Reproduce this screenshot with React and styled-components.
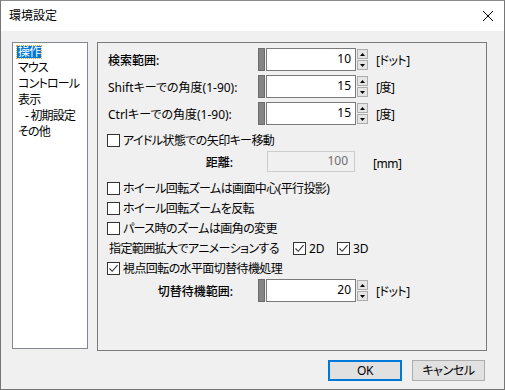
import styled, { createGlobalStyle } from "styled-components";

const GlobalStyle = createGlobalStyle`
  html, body {
    margin: 0;
    padding: 0;
    background: #ffffff;
  }
  body {
    font-family: "Noto Sans", "Noto Sans CJK JP", sans-serif;
    font-size: 12px;
    font-feature-settings: "palt";
    color: #000;
  }
  * {
    box-sizing: border-box;
  }
`;

const Window = styled.div`
  width: 505px;
  height: 390px;
  border: 1px solid #767676;
  border-top-color: #8a8a8a;
  background: #f0f0f0;
  display: flex;
  flex-direction: column;
`;

const TitleBar = styled.div`
  height: 30px;
  background: #ffffff;
  display: flex;
  align-items: center;
  justify-content: space-between;
  padding: 0 9px 1px 8px;
  font-size: 12px;
  line-height: 14px;
`;

const CloseButton = styled.span`
  display: flex;
  width: 12px;
  height: 12px;
  margin-right: 1px;
`;

const Body = styled.div`
  flex: 1;
  display: flex;
  flex-direction: column;
  padding: 11px 17px 8px 11px;
`;

const Main = styled.div`
  display: flex;
  align-items: flex-start;
  gap: 9px;
`;

const ListBox = styled.ul`
  list-style: none;
  margin: 0;
  width: 76px;
  height: 307px;
  padding: 1px 0 0 5px;
  background: #ffffff;
  border: 1px solid #828790;
  letter-spacing: -0.8px;
  overflow: hidden;
`;

const ListItem = styled.li`
  height: 16px;
  line-height: 16px;
  white-space: nowrap;
  padding-left: ${(p) => p.$indent || 0}px;
`;

const Selected = styled.span`
  display: inline-block;
  line-height: 12px;
  padding: 0 1px;
  margin-left: -1px;
  background: #0078d7;
  color: #ffffff;
  outline: 1px dotted #f7a23a;
`;

const Panel = styled.div`
  width: 390px;
  height: 309px;
  border: 1px solid #7a7a7a;
  padding: 5px 0 0 9px;
  display: flex;
  flex-direction: column;
`;

const FieldRow = styled.div`
  display: flex;
  align-items: center;
  height: ${(p) => p.$h || 23}px;
  margin-top: ${(p) => p.$mt || 0}px;
`;

const FieldLabel = styled.span`
  width: 151px;
  padding-left: 1px;
  padding-right: ${(p) => (p.$right ? 25 : 0)}px;
  text-align: ${(p) => (p.$right ? "right" : "left")};
  font-weight: ${(p) => (p.$bold ? 500 : 400)};
  white-space: nowrap;
`;

const Grip = styled.span`
  width: 7px;
  height: 23px;
  margin-right: 1px;
  background: #858585;
  border: 1px solid #6c6c6c;
`;

const NumberBox = styled.div`
  width: 90px;
  height: 23px;
  border: 1px solid #7a7a7a;
  background: #ffffff;
  text-align: right;
  padding-right: 4px;
  line-height: 20px;
`;

const DisabledBox = styled.div`
  width: 88px;
  height: 21px;
  margin-left: 9px;
  border: 1px solid #cccccc;
  background: #f0f0f0;
  color: #6d6d6d;
  text-align: right;
  padding-right: 6px;
  line-height: 18px;
`;

const Spin = styled.div`
  display: flex;
  flex-direction: column;
  gap: 1px;
  margin-left: 1px;
`;

const SpinButton = styled.span`
  width: 11px;
  height: 10px;
  background: #e5e5e5;
  border: 1px solid #acacac;
  display: flex;
  align-items: center;
  justify-content: center;
`;

const Unit = styled.span`
  margin-left: ${(p) => p.$ml || 8}px;
  white-space: nowrap;
  letter-spacing: -0.5px;
  padding-top: ${(p) => p.$pt || 0}px;
`;

const CheckRow = styled.label`
  display: flex;
  align-items: center;
  height: 20px;
  margin-top: ${(p) => p.$mt || 0}px;
  white-space: nowrap;
  letter-spacing: -0.6px;
`;

const Box = styled.span`
  width: 13px;
  height: 13px;
  flex: none;
  border: 1px solid #333333;
  background: #ffffff;
  margin-right: ${(p) => p.$mr || 3}px;
  display: flex;
  align-items: center;
  justify-content: center;
`;

const PlainLabel = styled.span`
  width: 186px;
  padding-left: 2px;
`;

const CheckItem = styled.span`
  display: flex;
  align-items: center;
  letter-spacing: 0;
  width: ${(p) => p.$w || "auto"};
`;

const Footer = styled.div`
  display: flex;
  justify-content: flex-end;
  gap: 10px;
  margin-top: 9px;
  margin-right: 2px;
`;

const Button = styled.button`
  width: ${(p) => p.$w || 74}px;
  height: 21px;
  padding: 0;
  font: inherit;
  font-size: 12px;
  letter-spacing: -0.4px;
  color: #000;
  background: #e1e1e1;
  border: ${(p) => (p.$default ? "2px solid #0078d7" : "1px solid #adadad")};
  line-height: 16px;
`;

function Check({ checked, mr }) {
  return (
    <Box $mr={mr}>
      {checked && (
        <svg width="11" height="11" viewBox="0 0 11 11">
          <polyline
            points="1.5,5.5 4.2,8.3 9.5,2.2"
            fill="none"
            stroke="#333"
            strokeWidth="1.1"
          />
        </svg>
      )}
    </Box>
  );
}

function Spinner() {
  return (
    <Spin>
      <SpinButton>
        <svg width="5" height="3" viewBox="0 0 5 3">
          <polygon points="0,3 5,3 2.5,0" fill="#000" />
        </svg>
      </SpinButton>
      <SpinButton>
        <svg width="5" height="3" viewBox="0 0 5 3">
          <polygon points="0,0 5,0 2.5,3" fill="#000" />
        </svg>
      </SpinButton>
    </Spin>
  );
}

function NumberField({ label, value, unit, bold, right, mt }) {
  return (
    <FieldRow $mt={mt}>
      <FieldLabel $bold={bold} $right={right}>
        {label}
      </FieldLabel>
      <Grip />
      <NumberBox>{value}</NumberBox>
      <Spinner />
      <Unit>{unit}</Unit>
    </FieldRow>
  );
}

const categories = [
  { name: "操作", selected: true },
  { name: "マウス" },
  { name: "コントロール" },
  { name: "表示" },
  { name: "- 初期設定", indent: 7 },
  { name: "その他" },
];

export default function App() {
  return (
    <>
      <GlobalStyle />
      <Window>
        <TitleBar>
          <span>環境設定</span>
          <CloseButton>
            <svg width="12" height="12" viewBox="0 0 12 12">
              <path d="M1 1 L11 11 M11 1 L1 11" stroke="#000" strokeWidth="1" />
            </svg>
          </CloseButton>
        </TitleBar>
        <Body>
          <Main>
            <ListBox>
              {categories.map((c) => (
                <ListItem key={c.name} $indent={c.indent}>
                  {c.selected ? <Selected>{c.name}</Selected> : c.name}
                </ListItem>
              ))}
            </ListBox>
            <Panel>
              <NumberField label="検索範囲:" value="10" unit="[ドット]" bold />
              <NumberField
                label="Shiftキーでの角度(1-90):"
                value="15"
                unit="[度]"
                mt={4}
              />
              <NumberField
                label="Ctrlキーでの角度(1-90):"
                value="15"
                unit="[度]"
                mt={4}
              />
              <CheckRow $mt={5}>
                <Check />
                アイドル状態での矢印キー移動
              </CheckRow>
              <FieldRow $h={21} $mt={1}>
                <FieldLabel $bold $right>
                  距離:
                </FieldLabel>
                <DisabledBox>100</DisabledBox>
                <Unit $ml={18} $pt={3}>
                  [mm]
                </Unit>
              </FieldRow>
              <CheckRow $mt={6}>
                <Check />
                ホイール回転ズームは画面中心(平行投影)
              </CheckRow>
              <CheckRow>
                <Check />
                ホイール回転ズームを反転
              </CheckRow>
              <CheckRow>
                <Check />
                パース時のズームは画角の変更
              </CheckRow>
              <CheckRow as="div">
                <PlainLabel>指定範囲拡大でアニメーションする</PlainLabel>
                <CheckItem $w="44px">
                  <Check checked mr={3} />
                  2D
                </CheckItem>
                <CheckItem>
                  <Check checked mr={3} />
                  3D
                </CheckItem>
              </CheckRow>
              <CheckRow>
                <Check checked />
                視点回転の水平面切替待機処理
              </CheckRow>
              <NumberField
                label="切替待機範囲:"
                value="20"
                unit="[ドット]"
                bold
                right
                mt={1}
              />
            </Panel>
          </Main>
          <Footer>
            <Button $default>OK</Button>
            <Button $w={73}>キャンセル</Button>
          </Footer>
        </Body>
      </Window>
    </>
  );
}
